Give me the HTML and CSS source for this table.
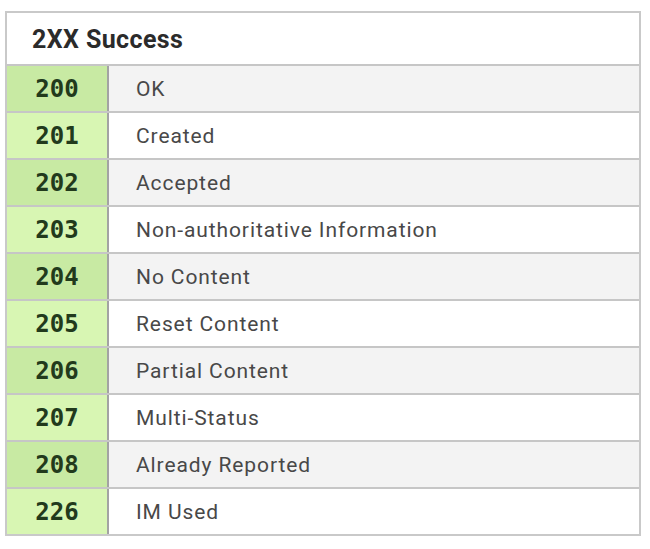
FILE: index.html
```html
<!DOCTYPE html>
<html>
<head>
<meta charset="utf-8">
<link rel="stylesheet" href="styles.css">
</head>
<body>
<div class="card">
  <div class="head">2XX Success</div>
  <div class="row odd"><div class="code">200</div><div class="desc">OK</div></div>
  <div class="row"><div class="code">201</div><div class="desc">Created</div></div>
  <div class="row odd"><div class="code">202</div><div class="desc">Accepted</div></div>
  <div class="row"><div class="code">203</div><div class="desc">Non-authoritative Information</div></div>
  <div class="row odd"><div class="code">204</div><div class="desc">No Content</div></div>
  <div class="row"><div class="code">205</div><div class="desc">Reset Content</div></div>
  <div class="row odd"><div class="code">206</div><div class="desc">Partial Content</div></div>
  <div class="row"><div class="code">207</div><div class="desc">Multi-Status</div></div>
  <div class="row odd"><div class="code">208</div><div class="desc">Already Reported</div></div>
  <div class="row"><div class="code">226</div><div class="desc">IM Used</div></div>
</div>
</body>
</html>
```
FILE: styles.css
```css
html, body { margin: 0; padding: 0; background: #ffffff; }
body { font-family: Roboto, "Liberation Sans", sans-serif; }
.card {
  margin: 11px 0 0 5px;
  width: 636px;
  box-sizing: border-box;
  border: 2px solid #c9c9c9;
  background: #fff;
}
.head {
  height: 51px;
  display: flex;
  align-items: center;
  padding-left: 25px;
  padding-top: 2px;
  box-sizing: border-box;
  font-size: 25px;
  font-weight: 700;
  color: #2b2b2b;
  letter-spacing: 0.4px;
}
.row {
  display: grid;
  grid-template-columns: 102px 1fr;
  height: 47px;
  border-top: 2px solid #c6c6c6;
  box-sizing: border-box;
}
.code {
  display: flex;
  align-items: center;
  justify-content: center;
  background: #d8f6b3;
  border-right: 2px solid #a3a3a3;
  font-family: "DejaVu Sans Mono", "Liberation Mono", monospace;
  font-weight: 700;
  font-size: 24px;
  color: #223a1c;
  padding-top: 1px;
}
.desc {
  display: flex;
  align-items: center;
  padding-left: 27px;
  font-size: 21px;
  color: #484848;
  letter-spacing: 0.9px;
}
.odd .code { background: #c8eaa3; }
.odd .desc { background: #f3f3f3; }
```
